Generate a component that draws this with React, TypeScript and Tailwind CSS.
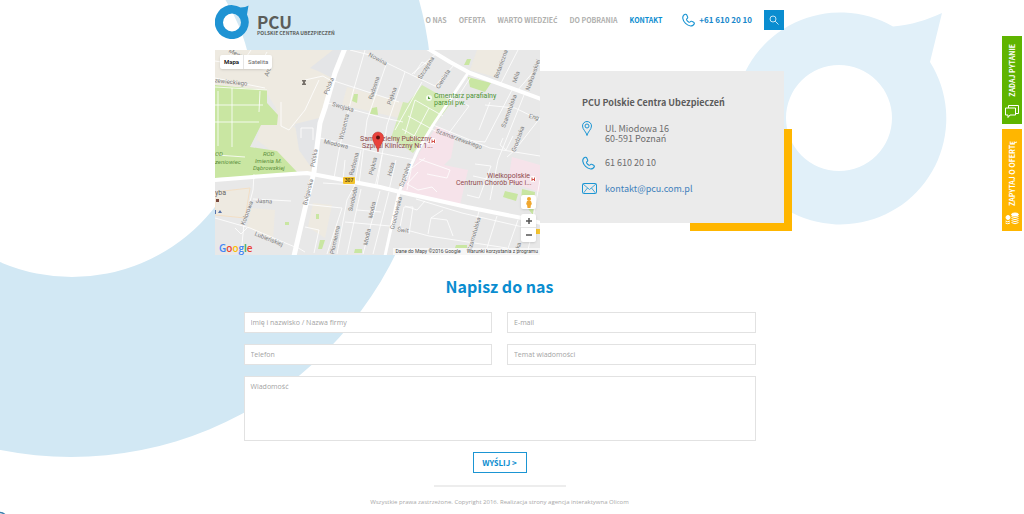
import React from 'react';

interface NavLink {
  href: string;
  label: string;
  active?: boolean;
}

interface MapLabel {
  x: number;
  y: number;
  angle: number;
  text: string;
}

const navLinks: NavLink[] = [
  { href: '#o-nas', label: 'O NAS' },
  { href: '#oferta', label: 'OFERTA' },
  { href: '#warto-wiedziec', label: 'WARTO WIEDZIEĆ' },
  { href: '#do-pobrania', label: 'DO POBRANIA' },
  { href: '#kontakt', label: 'KONTAKT', active: true },
];

// Street names, rotated around their own centre
const streetLabels: MapLabel[] = [
  { x: 20, y: 3, angle: 25, text: 'Mew' },
  { x: 53, y: 21, angle: -70, text: 'Arct' },
  { x: 16, y: 32, angle: 6, text: 'zewieckiego' },
  { x: 114, y: 36, angle: -68, text: 'Polska' },
  { x: 163, y: 9, angle: 28, text: 'Nowina' },
  { x: 211, y: 18, angle: -58, text: 'Szczęsna' },
  { x: 228, y: 29, angle: -58, text: 'Cienista' },
  { x: 159, y: 38, angle: -72, text: 'Radosna' },
  { x: 177, y: 46, angle: -70, text: 'Piękna' },
  { x: 286, y: 14, angle: -70, text: 'Botaniczna' },
  { x: 301, y: 27, angle: -70, text: 'Miła' },
  { x: 318, y: 25, angle: -70, text: 'Nałkowskiej' },
  { x: 294, y: 61, angle: -70, text: 'Szamotulska' },
  { x: 303, y: 89, angle: -70, text: 'Grodziska' },
  { x: 319, y: 67, angle: 15, text: 'Eng' },
  { x: 128, y: 57, angle: 16, text: 'Swojska' },
  { x: 129, y: 77, angle: -76, text: 'Wiosenna' },
  { x: 121, y: 94, angle: 13, text: 'Miodowa' },
  { x: 244, y: 89, angle: 20, text: 'Szamarzewskiego' },
  { x: 99, y: 108, angle: -80, text: 'Polska' },
  { x: 139, y: 114, angle: -76, text: 'Radosna' },
  { x: 158, y: 116, angle: -76, text: 'Piękna' },
  { x: 176, y: 119, angle: -76, text: 'Hoża' },
  { x: 190, y: 125, angle: -72, text: 'Szpitalna' },
  { x: 93, y: 142, angle: -76, text: 'Bułgarska' },
  { x: 49, y: 151, angle: 4, text: 'Jasna' },
  { x: 32, y: 163, angle: -70, text: 'Kolorowa' },
  { x: 54, y: 189, angle: 22, text: 'Lubieńskiej' },
  { x: 138, y: 149, angle: -78, text: 'Swoboda' },
  { x: 157, y: 160, angle: -78, text: 'Modra' },
  { x: 120, y: 190, angle: -78, text: 'Płomienna' },
  { x: 152, y: 187, angle: -78, text: 'Modła' },
  { x: 181, y: 163, angle: -76, text: 'Grochowska' },
  { x: 188, y: 180, angle: 8, text: 'Świt' },
  { x: 259, y: 184, angle: -74, text: 'Szamotulska' },
  { x: 303, y: 197, angle: -74, text: 'ska' },
];

const minorStreets: string[] = [
  'M0 11L55 20M18 0L12 12M36 0L26 15M52 2L43 18M0 37L52 40M0 28L50 38',
  'M17 38V97M45 41L44 62M0 55H48M0 72H44M2 105L30 107M3 41V96',
  'M66 52V76L74 80L90 60L104 30M90 30L108 26L113 29',
  'M86 88V78H98V90M135 0L155 5L222 37M113 29L150 41L184 52',
  'M113 53L165 67L188 72M105 88L165 103L200 110',
  'M218 75L275 98L325 106M150 0L138 42L125 95L119 128',
  'M172 12L152 70L144 134M190 22L172 75L162 136M207 32L180 80',
  'M240 14L220 36M222 3L197 24M199 24L207 12L214 15',
  'M303 0L285 35M325 14L302 41M297 40L270 92L250 90',
  'M275 52L264 80M255 28L241 50L254 56L234 83M270 55L300 58L325 70',
  'M309 45L283 110L275 150M325 68L300 100L292 107',
  'M288 88L285 95L291 100L298 86M132 70L126 88',
  'M130 110L128 130M146 100L140 132M167 105L160 137M181 110L174 140M198 110L192 140',
  'M39 124L38 140L29 174L26 204M38 149L76 151M0 168L35 178L80 197M20 178L26 184L32 178',
  'M88 154L127 158L112 204M90 177L104 180L99 203M80 196L90 202',
  'M108 133L140 135L132 150L122 204M146 139L132 204M165 141L148 204M174 142L158 204',
  'M130 172L175 176M142 160L166 162M189 157L184 182M189 157H198L194 184',
  'M201 149L247 163L325 181M184 178L214 186L292 198M228 160L216 168L213 184M216 168L232 170L238 186',
  'M210 151L202 160L190 156M264 161L253 204M282 166L270 204M303 170L291 204M320 170L312 204',
  'M260 114L276 116L264 148M252 145L264 148M258 126L272 129M325 130L318 168',
  'M197 118L210 108M203 122L192 134L203 140L217 137L222 142',
  'M204 109L235 120L232 128L212 124',
  'M193 66L224 83M187 79L214 94M200 50L190 84M214 58L196 92M200 50L228 66',
];

const ui = "font-['Noto_Sans_CJK_JP','Open_Sans',sans-serif]";

const PolishText: React.FC<{ text: string }> = ({ text }) => (
  <span>
    {text.split(/([ĆŚ])/).map((part, i) =>
      /^[ĆŚ]$/.test(part) ? (
        <span key={i} className="font-['Open_Sans',sans-serif]">{part}</span>
      ) : (
        part
      )
    )}
  </span>
);

const Backdrop: React.FC = () => (
  <svg
    className="absolute left-0 top-0 -z-10"
    width="1024"
    height="514"
    viewBox="0 0 1024 514"
    aria-hidden="true"
  >
    <path
      fill="#d2e8f4"
      fillRule="evenodd"
      d="M-290 96a361 361 0 1 0 722 0a361 361 0 1 0 -722 0ZM-109 96a181 181 0 1 1 362 0a181 181 0 1 1 -362 0Z"
    />
    <path
      fill="#e1f0f9"
      fillRule="evenodd"
      d="M893 26.500C911 25 927 20 942 13L930 62A106 106 0 1 1 893 26.500ZM839 65a53 53 0 1 0 0 106a53 53 0 1 0 0 -106Z"
    />
    <circle cx="0" cy="519" r="6.500" fill="none" stroke="#3b7fae" strokeWidth="1.500" />
  </svg>
);

const PhoneIcon: React.FC<{ className: string }> = ({ className }) => (
  <svg className={className} viewBox="0 0 24 24" fill="none" stroke="#1b95d3" strokeWidth="2" aria-hidden="true">
    <path d="M6 1.500C3 2.500 1 5 1.500 9C2.500 16 9 22.500 16 23C19.500 23 22 21 22.800 18.500C23 17.500 22.500 16.500 21.500 16L18 14.500C17 14 15.800 14.300 15.200 15.200C14.500 16.200 13.300 16.500 12.300 15.800C10.500 14.600 9.300 13.200 8.600 11.800C8.200 10.800 8.600 9.800 9.600 9.200C10.500 8.600 10.800 7.600 10.400 6.600L8.800 2.800C8.300 1.700 7.200 1.200 6 1.500Z" />
  </svg>
);

const Logo: React.FC = () => (
  <a href="#start" className="flex items-start gap-2">
    <svg width="34" height="34" viewBox="0 0 34 34" aria-hidden="true">
      <path
        fill="#1f93d3"
        fillRule="evenodd"
        d="M25.500 2.500C29 2.500 31.500 1.500 33.500 0.500L32 9.500A17 17 0 1 1 25.500 2.500ZM17 8.500a9 9 0 1 0 0 18a9 9 0 1 0 0 -18Z"
      />
    </svg>
    <span className="flex flex-col pt-2 text-[#5b5d5a]">
      <span className="text-[17px] leading-[17px] font-bold">PCU</span>
      <span className="text-[5px] leading-[6px] font-bold whitespace-nowrap">POLSKIE CENTRA UBEZPIECZEŃ</span>
    </span>
  </a>
);

const Header: React.FC = () => (
  <header className="flex items-start justify-between pt-[5px] pb-[11px]">
    <Logo />
    <div className="mt-[5px] flex h-5 items-center">
      <nav className="flex gap-3 text-[7px] leading-3 font-bold whitespace-nowrap">
        {navLinks.map((link) => (
          <a key={link.label} href={link.href} className={link.active ? 'text-[#0a8dd0]' : 'text-[#b0b0ae]'}>
            <PolishText text={link.label} />
          </a>
        ))}
      </nav>
      <a href="tel:+616102010" className="ml-5 flex items-center gap-1 text-[8px] leading-3 font-bold whitespace-nowrap text-[#1787cb]">
        <PhoneIcon className="h-[14px] w-[13px]" />
        +61 610 20 10
      </a>
      <button type="button" aria-label="Szukaj" className="ml-3 flex h-5 w-5 items-center justify-center bg-[#0a8dd0]">
        <svg width="10" height="10" viewBox="0 0 10 10" fill="none" stroke="#c5e4f4" aria-hidden="true">
          <circle cx="4" cy="4" r="3" />
          <path d="M6.200 6.200L9.500 9.500" />
        </svg>
      </button>
    </div>
  </header>
);

const MapPanel: React.FC = () => (
  <div className="relative h-[205px] w-[325px] shrink-0 overflow-hidden bg-[#e8e8e8] font-[Roboto,sans-serif]">
    <svg className="block" width="325" height="205" viewBox="0 0 325 205" role="img" aria-label="Mapa dojazdu">
      <rect width="325" height="205" fill="#e8e8e8" />
      <g fill="#eeeae1">
        <path d="M0 0H128L104 75L72 76L46 77L40 95L62 60L50 40L0 35Z" />
        <path d="M262 0H288L280 27L255 20Z" />
        <path d="M132 37L190 53L184 68L127 55Z" />
        <path d="M0 142L35 138L30 168L0 165Z" stroke="#f3dfc5" />
        <path d="M36 158L60 160L58 190L32 177Z" />
        <path d="M98 153L117 155L110 188L93 177Z" />
        <path d="M45 76L63 66L86 82L98 122L82 121L42 90Z" />
      </g>
      <path fill="#e4e5e7" d="M95 18L118 0H128L117 28L103 21ZM80 74L104 68L98 120L84 100Z" />
      <g fill="#c9e6a2">
        <path d="M0 35L52 40V53L63 65L62 75H46L35 97L62 101L82 122L40 126L0 128Z" />
        <path d="M207 35L237 52L198 103L176 88L188 52L193 53Z" fill="#d3eab6" />
        <path d="M253 27L276 33L270 42L255 37Z" />
        <path d="M139 44H143L142 53L137 51ZM157 58L162 57L163 65L155 64ZM101 164H104V169H101ZM105 190H110L107 199H103ZM70 172H74V175H70ZM140 199H147V203H139Z" />
        <path d="M252 9H256L254 15H249ZM290 141L303 144L301 151L288 147ZM307 139L320 142L318 165L306 150ZM241 195H252V198H240Z" />
      </g>
      <g fill="#f6e3ea">
        <path d="M222 76L240 86L236 108L229 115L253 120L245 155L187 141L204 103Z" />
        <path d="M297 107L325 115V142L293 132Z" />
      </g>
      <g fill="none" stroke="#fff" strokeLinejoin="round">
        {minorStreets.map((d) => (
          <path key={d} d={d} strokeOpacity="0.8" />
        ))}
        <path strokeWidth="5" d="M130 -2L120 23L110 58L105 73L101 105L99 122L92 150L79 206" />
        <path strokeWidth="4" d="M-1 130L62 125L92 123L165 137L185 142L252 157L307 168L326 173" />
        <path strokeWidth="4" d="M212 -2L235 12L255 23L326 49" />
        <path strokeWidth="3" d="M253 23L218 75L203 100L184 142L170 206" />
      </g>
      <g fontSize="6" fill="#7c7c7c" textAnchor="middle">
        {streetLabels.map(({ x, y, angle, text }) => (
          <text key={`${text}-${x}`} x={x} y={y + 2} transform={`rotate(${angle} ${x} ${y})`}>
            {text}
          </text>
        ))}
      </g>
      <g fontSize="6" fill="#5d8f3c" fontStyle="italic">
        <text x="0" y="106">OD</text>
        <text x="0" y="114">zeniowiec</text>
        <text x="48" y="106">ROD</text>
        <text x="40" y="113">Imienia M.</text>
        <text x="38" y="120">Dąbrowskiej</text>
      </g>
      <g fontSize="7" fill="#4d9436">
        <circle cx="214" cy="48" r="3" fill="#fff" fillOpacity="0.8" />
        <path d="M213 49V46L215.500 49Z" />
        <text x="219" y="48">Cmentarz parafialny</text>
        <text x="219" y="55">parafii pw.</text>
      </g>
      <g fontSize="7" fill="#8e4a4d">
        <text x="145" y="91">Samodzielny Publiczny</text>
        <text x="147" y="98">Szpital Kliniczny Nr 1...</text>
        <text x="272" y="128">Wielkopolskie</text>
        <text x="241" y="135">Centrum Chorób Płuc i...</text>
      </g>
      <circle cx="218" cy="91" r="3" fill="#fff" />
      <circle cx="318" cy="129" r="3" fill="#fff" />
      <path stroke="#d4524b" fill="none" d="M217 89.500V93M219.500 89.500V93M217 91.500H219.500M317 127.500V131M319.500 127.500V131M317 129.500H319.500" />
      <text x="0" y="145" fontSize="7" fill="#666">yba</text>
      <path fill="#7b4a3e" d="M1 149H4V152H1Z" />
      <path fill="#5872a8" d="M3 163L5 160L7 163ZM0 160H1V164H0Z" />
      <path fill="#77716a" d="M87 30H91V31L90 32V33L91 34V35H87V34L88 33V32L87 31Z" />
      <rect x="128" y="127" width="12" height="7" rx="1" fill="#f4c430" />
      <text x="134" y="132" fontSize="5" fontWeight="bold" fill="#5d4a10" textAnchor="middle">307</text>
      <path fill="#f4c430" d="M321 179H325V184H321Z" />
      <path
        fill="#e9433c"
        stroke="#b5352f"
        strokeWidth="0.500"
        d="M163 102C162 95 157.500 93 157.500 87.500A5.500 5.500 0 0 1 168.500 87.500C168.500 93 164 95 163 102Z"
      />
      <circle cx="163" cy="87.500" r="2" fill="#5c120f" />
    </svg>

    <div className="absolute left-[5px] top-[5px] flex rounded-xs bg-white text-[6px] leading-[14px] shadow-sm">
      <button type="button" className="border-r border-[#e6e6e6] px-1 font-medium text-black">Mapa</button>
      <button type="button" className="px-1 text-[#666]">Satelita</button>
    </div>
    <button type="button" aria-label="Street View" className="absolute left-[306px] top-[145px] flex h-[14px] w-[15px] items-center justify-center rounded-xs bg-white shadow-sm">
      <svg width="6" height="11" viewBox="0 0 6 11" fill="#f0a72e" aria-hidden="true">
        <circle cx="3" cy="2" r="2" />
        <path d="M1 4H5L6 7.500H5L4.500 11H1.500L1 7.500H0Z" />
      </svg>
    </button>
    <div className="absolute left-[306px] top-[164px] flex w-[15px] flex-col rounded-xs bg-white shadow-sm">
      <button type="button" aria-label="Powiększ" className="flex h-[14px] items-center justify-center border-b border-[#e6e6e6]">
        <svg width="6" height="6" viewBox="0 0 6 6" stroke="#555" strokeWidth="1.500" aria-hidden="true">
          <path d="M0 3H6M3 0V6" />
        </svg>
      </button>
      <button type="button" aria-label="Pomniejsz" className="flex h-[14px] items-center justify-center">
        <svg width="6" height="6" viewBox="0 0 6 6" stroke="#555" strokeWidth="1.500" aria-hidden="true">
          <path d="M0 3H6" />
        </svg>
      </button>
    </div>
    <a href="#google" className="absolute bottom-[1px] left-1 font-['Open_Sans',sans-serif] text-[10px] leading-3 font-semibold text-[#4285f4]">
      G<span className="text-[#ea4335]">o</span><span className="text-[#fbbc05]">o</span>g
      <span className="text-[#34a853]">l</span><span className="text-[#ea4335]">e</span>
    </a>
    <div className="absolute right-0 bottom-0 flex gap-[6px] bg-white/60 px-[2px] text-[5px] leading-[7px] whitespace-nowrap text-[#444]">
      <span>Dane do Mapy ©2016 Google</span>
      <a href="#warunki">Warunki korzystania z programu</a>
    </div>
  </div>
);

const ContactCard: React.FC = () => (
  <div className="relative isolate mt-[21px] mb-8 flex-1">
    <div className="absolute -right-2 -bottom-2 -z-10 h-[102px] w-[102px] bg-[#ffb600]" />
    <address className="flex h-full flex-col bg-[#ebebeb] pt-[26px] pl-[42px] text-[9px] leading-[10px] text-[#6d6d6d] not-italic">
      <h2 className="leading-3 font-bold text-[#5c5c5c]">PCU Polskie Centra Ubezpieczeń</h2>
      <div className="mt-3 flex items-start">
        <svg className="w-[10px] shrink-0" height="15" viewBox="0 0 10 15" fill="none" stroke="#1b95d3" aria-hidden="true">
          <path d="M5 14.500C4.500 11 0.500 8.500 0.500 5A4.500 4.500 0 0 1 9.500 5C9.500 8.500 5.500 11 5 14.500Z" />
          <circle cx="5" cy="5" r="2" />
        </svg>
        <p className="pt-[3px] pl-[13px]">
          Ul. Miodowa 16
          <br />
          60-591 Poznań
        </p>
      </div>
      <div className="mt-3 flex items-center gap-[10px]">
        <PhoneIcon className="h-[14px] w-[13px]" />
        <span>61 610 20 10</span>
      </div>
      <div className="mt-[13px] flex items-center gap-2">
        <svg width="15" height="11" viewBox="0 0 15 11" fill="none" stroke="#1b95d3" aria-hidden="true">
          <rect x="0.500" y="0.500" width="14" height="10" rx="1" />
          <path d="M1 1L7.500 6.500L14 1M1.500 10L5.500 5M13.500 10L9.500 5" strokeWidth="0.800" />
        </svg>
        <a href="mailto:kontakt@pcu.com.pl" className="text-[#4180bb]">kontakt@pcu.com.pl</a>
      </div>
    </address>
  </div>
);

const fieldClass =
  "block w-full border border-[#e2e2e2] bg-white px-[6px] font-['Open_Sans',sans-serif] text-[7px] text-[#777] outline-none placeholder:text-[#a3a3a3]";

const ContactForm: React.FC = () => (
  <section className="mx-auto mt-[19px] w-full max-w-[512px]">
    <h1 className="text-center text-base leading-6 font-bold text-[#0a8dd0]">Napisz do nas</h1>
    <form className="mt-[14px] grid grid-cols-2 gap-x-[15px] gap-y-[11px]">
      <input type="text" aria-label="Imię i nazwisko / Nazwa firmy" placeholder="Imię i nazwisko / Nazwa firmy" className={`${fieldClass} h-[21px]`} />
      <input type="email" aria-label="E-mail" placeholder="E-mail" className={`${fieldClass} h-[21px]`} />
      <input type="tel" aria-label="Telefon" placeholder="Telefon" className={`${fieldClass} h-[21px]`} />
      <input type="text" aria-label="Temat wiadomości" placeholder="Temat wiadomości" className={`${fieldClass} h-[21px]`} />
      <textarea aria-label="Wiadomość" placeholder="Wiadomość" className={`${fieldClass} col-span-2 h-[65px] resize-none py-1 leading-3`} />
      <div className="col-span-2 flex justify-center">
        <button type="submit" className="h-[21px] w-[54px] border border-[#1b95d3] bg-white text-[8px] leading-3 font-bold text-[#0a8dd0]">
          <PolishText text="WYŚLIJ >" />
        </button>
      </div>
    </form>
  </section>
);

const SideTabs: React.FC = () => (
  <aside className="absolute top-9 right-[2px] flex flex-col gap-[5px] text-[7px] leading-3 font-bold whitespace-nowrap text-white">
    <button type="button" className="flex h-[88px] w-5 flex-col-reverse items-center justify-start gap-2 bg-[#5fb400] pb-[6px]">
      <svg width="14" height="13" viewBox="0 0 14 13" fill="none" stroke="#fff" aria-hidden="true">
        <path d="M3.500 3V0.500H13.500V8.500H11M0.500 3H10.500V10H5L3 12.500V10H0.500Z" />
      </svg>
      <span className="rotate-180 [writing-mode:vertical-rl]">ZADAJ PYTANIE</span>
    </button>
    <button type="button" className="flex h-[102px] w-5 flex-col-reverse items-center justify-start gap-[6px] bg-[#ffb600] pb-[6px]">
      <svg width="14" height="13" viewBox="0 0 14 13" fill="none" stroke="#fff" aria-hidden="true">
        <ellipse cx="10" cy="2.500" rx="3.500" ry="1.500" fill="#fff" />
        <path d="M6.500 4.500Q10 7 13.500 4.500M6.500 6.500Q10 9 13.500 6.500M6.500 8.500Q10 11 13.500 8.500M6.500 10.500Q10 13 13.500 10.500M0.500 9Q2.500 10.500 5 9M0.500 11Q2.500 12.500 5 11" />
        <circle cx="3" cy="5.500" r="2" fill="#fff" />
      </svg>
      <span className="rotate-180 [writing-mode:vertical-rl]">ZAPYTAJ O OFERTĘ</span>
    </button>
  </aside>
);

const Footer: React.FC = () => (
  <footer className="mt-3 flex flex-col items-center pb-2">
    <div className="h-[2px] w-[132px] bg-[#ededed]" />
    <p className="mt-[9px] font-['Open_Sans',sans-serif] text-[6px] leading-3 text-[#a8a8a8]">
      Wszystkie prawa zastrzeżone. Copyright 2016. Realizacja strony agencja interaktywna Olicom
    </p>
  </footer>
);

const App: React.FC = () => (
  <div className={`relative isolate min-h-screen overflow-hidden bg-white pr-[25px] ${ui}`}>
    <Backdrop />
    <div className="mx-auto w-full max-w-[569px]">
      <Header />
      <main>
        <div className="flex">
          <MapPanel />
          <ContactCard />
        </div>
        <ContactForm />
      </main>
      <Footer />
    </div>
    <SideTabs />
  </div>
);

export default App;
